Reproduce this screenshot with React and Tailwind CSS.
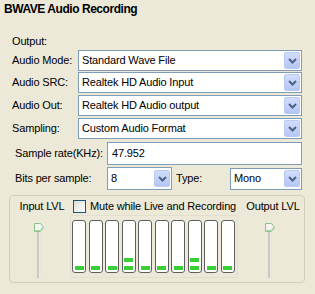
import React from "react";

function Chevron() {
  return (
    <svg width="9" height="6" viewBox="0 0 9 6">
      <path d="M1 1 L4.5 4.5 L8 1" fill="none" stroke="#4D6185" strokeWidth="2" />
    </svg>
  );
}

function Combo({ value, className }) {
  return (
    <div className={`shrink-0 flex items-center border border-[#7F9DB9] bg-white ${className}`}>
      <span className="flex-1 pl-[3px] leading-none whitespace-nowrap overflow-hidden">{value}</span>
      <div className="w-[16px] h-[17px] mr-px flex items-center justify-center rounded-[2px] border border-[#B9CBF3] bg-gradient-to-b from-[#D2DDFB] to-[#B4C6F4]">
        <Chevron />
      </div>
    </div>
  );
}

function Thumb() {
  return (
    <svg width="12" height="11" viewBox="0 0 12 11" className="absolute top-0 left-1/2 -translate-x-1/2">
      <path d="M1.5 1.5 H7.5 L10.5 5.5 L7.5 9.5 H1.5 Z" fill="#F4F4F0" stroke="#8BC48B" strokeWidth="1" />
      <path d="M2.5 8.5 H7 L9.5 5.5" fill="none" stroke="#9DD39D" strokeWidth="1" />
    </svg>
  );
}

function VSlider() {
  return (
    <div className="relative w-[14px] h-[56px]">
      <div className="absolute left-1/2 top-[4px] bottom-0 w-[3px] -translate-x-1/2 border-l border-[#9A9A8E] bg-white border-r border-r-[#D8D6CC]" />
      <Thumb />
    </div>
  );
}

function Bar({ level }) {
  return (
    <div className="shrink-0 w-[14px] h-[53px] border border-[#5E5E5E] rounded-[3px] bg-white flex flex-col-reverse items-center gap-[4px] pb-[2px]">
      {Array.from({ length: level }).map((_, i) => (
        <div key={i} className="w-[9px] h-[4px] bg-[#39CF39]" />
      ))}
    </div>
  );
}

export default function App() {
  const levels = [1, 1, 1, 2, 1, 1, 1, 2, 1, 1];
  return (
    <div
      className="w-[315px] h-[294px] bg-[#ECE9D8] text-[11px] tracking-[-0.15px] text-black overflow-hidden relative whitespace-nowrap"
      style={{ fontFamily: '"Liberation Sans", Arial, sans-serif' }}
    >
      <div className="pl-[4px] pt-[2px] h-[16px] leading-[14px] font-bold text-[12px] tracking-[-0.45px]">BWAVE Audio Recording</div>

      <div className="pl-[12px] mt-[19px] h-[13px] leading-[13px]">Output:</div>

      <div className="flex flex-col mt-[2px]">
        {[
          ["Audio Mode:", "Standard Wave File"],
          ["Audio SRC:", "Realtek HD Audio Input"],
          ["Audio Out:", "Realtek HD Audio output"],
          ["Sampling:", "Custom Audio Format"],
        ].map(([label, val], i) => (
          <div key={label} className={`flex items-center ${i === 0 ? "" : i === 1 ? "mt-px" : "mt-[2px]"}`}>
            <span className="shrink-0 w-[78px] pl-[12px]">{label}</span>
            <Combo value={val} className="w-[224px] h-[21px]" />
          </div>
        ))}
      </div>

      <div className="flex items-center mt-[3px]">
        <span className="shrink-0 w-[107px] pl-[15px]">Sample rate(KHz):</span>
        <div className="shrink-0 w-[195px] h-[23px] border border-[#7F9DB9] bg-white flex items-center pl-[4px]">47.952</div>
      </div>

      <div className="flex items-center mt-[2px]">
        <span className="shrink-0 w-[107px] pl-[15px]">Bits per sample:</span>
        <Combo value="8" className="w-[65px] h-[23px]" />
        <span className="shrink-0 ml-[4px] w-[54px]">Type:</span>
        <Combo value="Mono" className="w-[72px] h-[22px]" />
      </div>

      <div className="ml-[9px] mt-[5px] w-[296px] h-[88px] border border-[#D0D0BF] rounded-[4px] flex">
        <div className="shrink-0 w-[60px] flex flex-col items-center">
          <div className="mt-[3px] h-[14px] leading-[14px] pl-[4px]">Input LVL</div>
          <div className="mt-[9px] ml-[-3px]">
            <VSlider />
          </div>
        </div>
        <div className="shrink-0 flex flex-col">
          <div className="flex items-center mt-[3px] h-[14px]">
            <div className="w-[13px] h-[13px] border border-[#1C5180] bg-gradient-to-br from-[#DCDCD6] to-white ml-[3px]" />
            <span className="ml-[4px] leading-[14px]">Mute while Live and Recording</span>
          </div>
          <div className="mt-[2px] w-[168px] h-[63px] border border-[#E2DED0] rounded-[2px] flex items-start pt-[4px] pl-[1px] gap-[2.5px]">
            {levels.map((l, i) => (
              <Bar key={i} level={l} />
            ))}
          </div>
        </div>
        <div className="flex-1 flex flex-col items-center">
          <div className="mt-[3px] h-[14px] leading-[14px] pl-[4px]">Output LVL</div>
          <div className="mt-[9px] ml-[-2px]">
            <VSlider />
          </div>
        </div>
      </div>
    </div>
  );
}
